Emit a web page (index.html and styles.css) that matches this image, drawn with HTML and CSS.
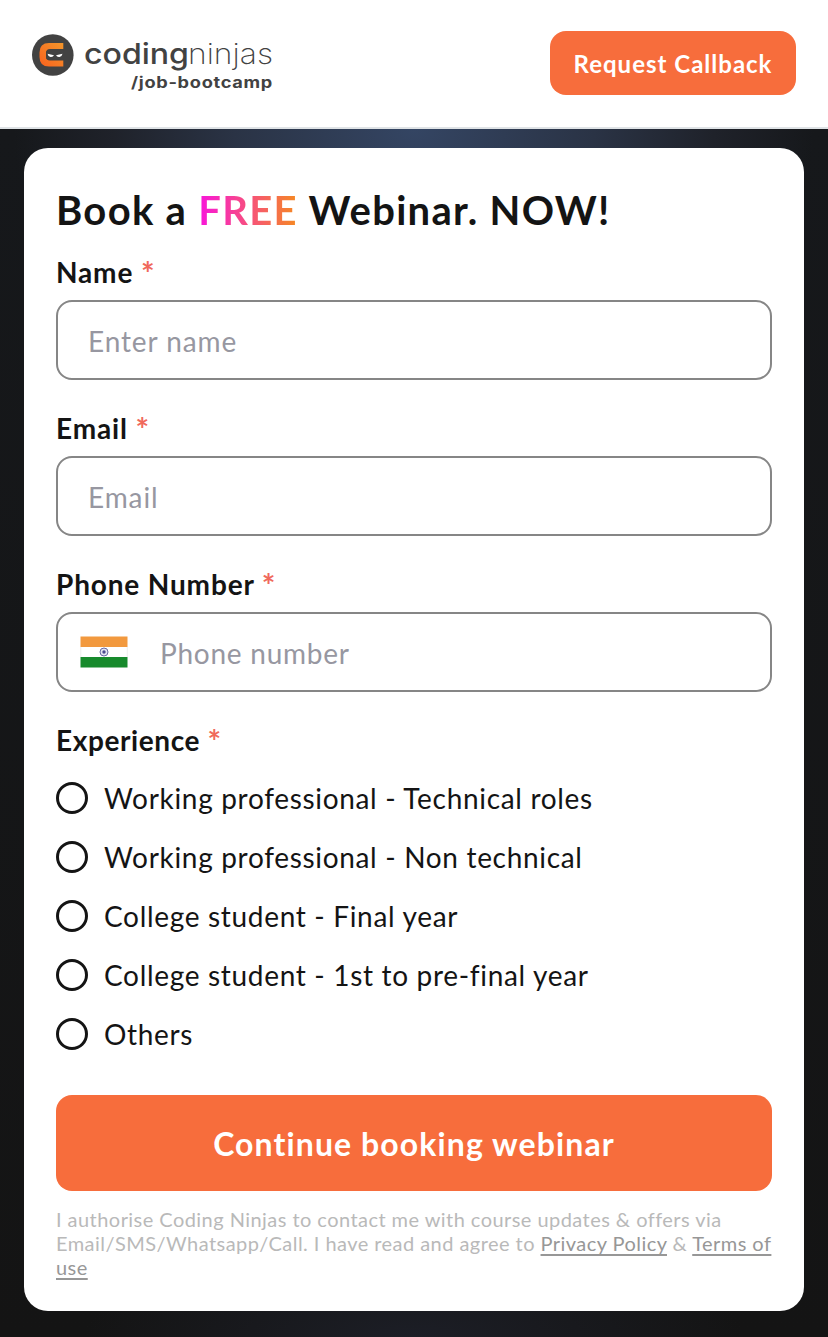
FILE: index.html
```
<!DOCTYPE html>
<html lang="en">
<head>
  <meta charset="UTF-8" />
  <meta name="viewport" content="width=device-width, initial-scale=1.0"/>
  <title>Coding Ninjas Job Bootcamp</title>
  <link rel="stylesheet" href="styles.css">
</head>
<body>
  <!-- Header -->
  <header class="header">
    <svg class="logo" width="244" height="60" viewBox="0 0 244 60" role="img" aria-label="Coding Ninjas job bootcamp">
      <defs>
        <linearGradient id="logoOrange" x1="0" y1="1" x2="1" y2="0">
          <stop offset="0" stop-color="#f9611e"/>
          <stop offset="1" stop-color="#f2962b"/>
        </linearGradient>
      </defs>
      <circle cx="20.800" cy="22" r="20.800" fill="#424242"/>
      <path d="M31.300 10H17Q7.500 10 7.500 19.500V24Q7.500 33.500 17 33.500H31.300V27.500H18Q14 27.500 14 23.500V20Q14 16 18 16H31.300Z" fill="url(#logoOrange)"/>
      <path d="M16 17.500H31.500V26.500H16Q14 26.500 14 24V20Q14 17.500 16 17.500Z" fill="#424242"/>
      <path d="M15.500 20.800L22 22.300Q21 24.300 18.500 24Q16 23.600 15.500 20.800ZM30.500 20.800L24 22.300Q25 24.300 27.500 24Q30 23.600 30.500 20.800Z" fill="#fff"/>
      <text class="logo-bold" x="52" y="30.500" textLength="105" lengthAdjust="spacingAndGlyphs">coding</text>
      <text class="logo-light" x="156" y="30.500" textLength="85" lengthAdjust="spacingAndGlyphs">ninjas</text>
      <text class="logo-sub" x="99" y="54.500" textLength="142" lengthAdjust="spacingAndGlyphs">/job-bootcamp</text>
    </svg>
    <button class="callback-btn">Request Callback</button>
  </header>

  <!-- Webinar Form -->
  <main class="hero">
    <form class="card">
      <h1>Book a <span class="free">FREE</span> Webinar. NOW!</h1>

      <div class="field">
        <label for="name">Name <span class="required">*</span></label>
        <input type="text" id="name" placeholder="Enter name" />
      </div>

      <div class="field">
        <label for="email">Email <span class="required">*</span></label>
        <input type="email" id="email" placeholder="Email" />
      </div>

      <div class="field">
        <label for="phone">Phone Number <span class="required">*</span></label>
        <div class="phone-box">
          <svg class="flag" width="48" height="32" viewBox="0 0 48 32">
            <rect x=".5" width="47" height="32" fill="#fff"/>
            <rect x=".5" y=".5" width="47" height="10.500" fill="#f2993e"/>
            <rect x=".5" y="21" width="47" height="10.500" fill="#178a2c"/>
            <path d="M.75 11V21M47.250 11V21" stroke="#ddd" stroke-width=".5"/>
            <circle cx="24" cy="16" r="4" fill="#e4e4f2" stroke="#6a6aa5"/>
            <circle cx="24" cy="16" r="1.700" fill="#4b4b90"/>
          </svg>
          <input type="tel" id="phone" placeholder="Phone number" />
        </div>
      </div>

      <div class="experience">
        <p class="group-label">Experience <span class="required">*</span></p>
        <label class="option"><input type="radio" name="exp" /><span>Working professional - Technical roles</span></label>
        <label class="option"><input type="radio" name="exp" /><span>Working professional - Non technical</span></label>
        <label class="option"><input type="radio" name="exp" /><span>College student - Final year</span></label>
        <label class="option"><input type="radio" name="exp" /><span>College student - 1st to pre-final year</span></label>
        <label class="option"><input type="radio" name="exp" /><span>Others</span></label>
      </div>

      <button type="button" class="submit-btn">Continue booking webinar</button>
      <p class="legal">I authorise Coding Ninjas to contact me with course updates &amp; offers via<br/>Email/SMS/Whatsapp/Call. I have read and agree to <a href="#">Privacy Policy</a> &amp; <a href="#">Terms of<br/>use</a></p>
    </form>
  </main>
</body>
</html>
```
FILE: styles.css
```
/* Reset & Base */
* { box-sizing: border-box; margin: 0; padding: 0; }
body { font-family: Lato, "Open Sans", sans-serif; background: #141414; color: #141414; }
button, input { font-family: inherit; }

/* Header */
.header {
  display: flex;
  justify-content: space-between;
  align-items: center;
  height: 129px;
  padding: 0 32px 2px;
  background: #fff;
  border-bottom: 2px solid #dfe3e6;
}
.logo { display: block; }
.logo text { font-family: Inter, sans-serif; fill: #424242; }
.logo .logo-bold { font-size: 29px; font-weight: 500; }
.logo .logo-light { font-size: 29px; font-weight: 200; }
.logo .logo-sub { font-size: 15.5px; font-weight: 700; letter-spacing: 0.6px; }
.callback-btn {
  width: 246px;
  height: 64px;
  border: none;
  border-radius: 16px;
  background: #f76d3c;
  color: #fff;
  font-size: 24px;
  font-weight: 700;
  letter-spacing: 1px;
  padding-top: 2px;
}

/* Hero & Card */
.hero {
  height: 1208px;
  padding: 19px 24px 26px;
  background:
    radial-gradient(400px 300px at 50% 0, #344563, #2a3345 45%, #1f222a 75%, rgba(22, 24, 27, 0)),
    radial-gradient(330px 100px at 50% 100%, #1c1e26, rgba(28, 30, 38, 0)),
    linear-gradient(#16181b, #141414);
}
.card {
  height: 1163px;
  padding: 32px;
  border-radius: 24px;
  background: #fff;
}
h1 { font-size: 40px; line-height: 60px; font-weight: 700; letter-spacing: 1.3px; white-space: nowrap; }
.free {
  background: linear-gradient(90deg, #f814dc, #f58a20);
  -webkit-background-clip: text;
  background-clip: text;
  color: transparent;
}

/* Form Fields */
.field { height: 156px; }
.field label, .group-label {
  display: block;
  height: 60px;
  padding-top: 15px;
  font-size: 28px;
  line-height: 34px;
  font-weight: 700;
  letter-spacing: 0.85px;
}
.group-label { letter-spacing: 0.6px; }
.required { color: #f0695c; font-size: 32px; line-height: 1; vertical-align: -3px; }
.field input {
  width: 100%;
  height: 80px;
  padding: 1px 30px 0;
  border: 2px solid #868686;
  border-radius: 16px;
  background: #fff;
  font-size: 28px;
  letter-spacing: 0.9px;
}
input::placeholder { color: #9797a1; opacity: 1; }
.phone-box {
  display: flex;
  align-items: center;
  height: 80px;
  padding-left: 22px;
  border: 2px solid #868686;
  border-radius: 16px;
}
.field .phone-box input { flex: 1; height: 76px; padding-left: 32px; border: none; letter-spacing: 0.75px; }
.flag { flex: none; }

/* Experience Options */
.experience { height: 387px; }
.option {
  display: flex;
  align-items: center;
  gap: 16px;
  height: 59px;
  font-size: 28px;
  letter-spacing: 0.68px;
}
.option input {
  appearance: none;
  width: 32px;
  height: 32px;
  border: 3px solid #141414;
  border-radius: 50%;
}

/* Submit & Legal */
.submit-btn {
  display: block;
  width: 100%;
  height: 96px;
  border: none;
  border-radius: 16px;
  background: #f76d3c;
  color: #fff;
  font-size: 32px;
  font-weight: 700;
  letter-spacing: 1.1px;
}
.legal { margin-top: 16px; font-size: 20px; line-height: 24px; color: #b9b9b9; white-space: nowrap; letter-spacing: 0.45px; }
.legal a { color: #979797; text-decoration-thickness: 2px; text-underline-offset: 3px; }
```
